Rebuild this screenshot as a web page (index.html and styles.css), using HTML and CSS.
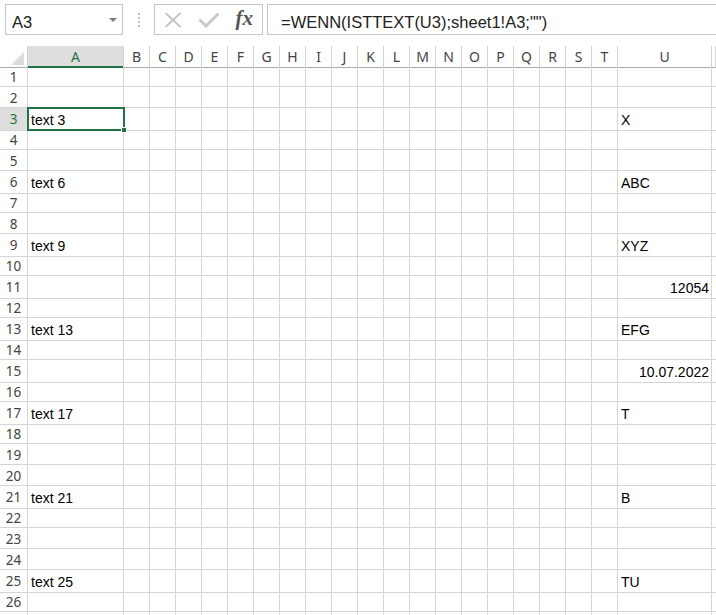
FILE: index.html
```
<!DOCTYPE html>
<html lang="de">
<head>
<meta charset="utf-8">
<title>Excel</title>
<link rel="stylesheet" href="styles.css">
</head>
<body>
<div class="topbar">
  <div class="namebox"><span class="nbtext">A3</span><span class="caret"></span></div>
  <div class="grip"><span></span><span></span><span></span><span></span></div>
  <div class="fxbtns">
    <span class="btn"><svg width="18" height="16" viewBox="0 0 18 16"><path d="M1.5 1 L16.5 15 M16.5 1 L1.5 15" stroke="#c3c3c3" stroke-width="1.8" fill="none"/></svg></span>
    <span class="btn"><svg width="22" height="16" viewBox="0 0 22 16"><path d="M1.5 7.5 L8 14 L20.5 1.5" stroke="#c8c8c8" stroke-width="3" fill="none"/></svg></span>
    <span class="btn fx">fx</span>
  </div>
  <div class="formula">=WENN(ISTTEXT(U3);sheet1!A3;"")</div>
</div>
<div class="sheet">
  <div class="row head">
    <div class="corner"></div>
    <div class="h sel">A</div><div class="h">B</div><div class="h">C</div><div class="h">D</div><div class="h">E</div><div class="h">F</div><div class="h">G</div><div class="h">H</div><div class="h">I</div><div class="h">J</div><div class="h">K</div><div class="h">L</div><div class="h">M</div><div class="h">N</div><div class="h">O</div><div class="h">P</div><div class="h">Q</div><div class="h">R</div><div class="h">S</div><div class="h">T</div><div class="h">U</div><div class="h"></div>
  </div>
  <div class="row"><div class="rh">1</div><div class="c"></div><div class="mid"></div><div class="c"></div><div class="c"></div></div>
  <div class="row"><div class="rh">2</div><div class="c"></div><div class="mid"></div><div class="c"></div><div class="c"></div></div>
  <div class="row"><div class="rh sel">3</div><div class="c">text 3</div><div class="mid"></div><div class="c">X</div><div class="c"></div></div>
  <div class="row"><div class="rh">4</div><div class="c"></div><div class="mid"></div><div class="c"></div><div class="c"></div></div>
  <div class="row"><div class="rh">5</div><div class="c"></div><div class="mid"></div><div class="c"></div><div class="c"></div></div>
  <div class="row"><div class="rh">6</div><div class="c">text 6</div><div class="mid"></div><div class="c">ABC</div><div class="c"></div></div>
  <div class="row"><div class="rh">7</div><div class="c"></div><div class="mid"></div><div class="c"></div><div class="c"></div></div>
  <div class="row"><div class="rh">8</div><div class="c"></div><div class="mid"></div><div class="c"></div><div class="c"></div></div>
  <div class="row"><div class="rh">9</div><div class="c">text 9</div><div class="mid"></div><div class="c">XYZ</div><div class="c"></div></div>
  <div class="row"><div class="rh">10</div><div class="c"></div><div class="mid"></div><div class="c"></div><div class="c"></div></div>
  <div class="row"><div class="rh">11</div><div class="c"></div><div class="mid"></div><div class="c num">12054</div><div class="c"></div></div>
  <div class="row"><div class="rh">12</div><div class="c"></div><div class="mid"></div><div class="c"></div><div class="c"></div></div>
  <div class="row"><div class="rh">13</div><div class="c">text 13</div><div class="mid"></div><div class="c">EFG</div><div class="c"></div></div>
  <div class="row"><div class="rh">14</div><div class="c"></div><div class="mid"></div><div class="c"></div><div class="c"></div></div>
  <div class="row"><div class="rh">15</div><div class="c"></div><div class="mid"></div><div class="c num">10.07.2022</div><div class="c"></div></div>
  <div class="row"><div class="rh">16</div><div class="c"></div><div class="mid"></div><div class="c"></div><div class="c"></div></div>
  <div class="row"><div class="rh">17</div><div class="c">text 17</div><div class="mid"></div><div class="c">T</div><div class="c"></div></div>
  <div class="row"><div class="rh">18</div><div class="c"></div><div class="mid"></div><div class="c"></div><div class="c"></div></div>
  <div class="row"><div class="rh">19</div><div class="c"></div><div class="mid"></div><div class="c"></div><div class="c"></div></div>
  <div class="row"><div class="rh">20</div><div class="c"></div><div class="mid"></div><div class="c"></div><div class="c"></div></div>
  <div class="row"><div class="rh">21</div><div class="c">text 21</div><div class="mid"></div><div class="c">B</div><div class="c"></div></div>
  <div class="row"><div class="rh">22</div><div class="c"></div><div class="mid"></div><div class="c"></div><div class="c"></div></div>
  <div class="row"><div class="rh">23</div><div class="c"></div><div class="mid"></div><div class="c"></div><div class="c"></div></div>
  <div class="row"><div class="rh">24</div><div class="c"></div><div class="mid"></div><div class="c"></div><div class="c"></div></div>
  <div class="row"><div class="rh">25</div><div class="c">text 25</div><div class="mid"></div><div class="c">TU</div><div class="c"></div></div>
  <div class="row"><div class="rh">26</div><div class="c"></div><div class="mid"></div><div class="c"></div><div class="c"></div></div>
  <div class="row"><div class="rh"></div><div class="c"></div><div class="mid"></div><div class="c"></div><div class="c"></div></div>
  <div class="selection"><span class="handle"></span></div>
</div>
</body>
</html>
```
FILE: styles.css
```
* { box-sizing: border-box; }
html, body { margin: 0; padding: 0; }
body {
  width: 716px;
  height: 615px;
  overflow: hidden;
  background: #fff;
  font-family: "Liberation Sans", Arial, sans-serif;
  color: #000;
}

/* formula bar */
.topbar {
  height: 46px;
  display: flex;
  align-items: flex-start;
  padding: 4px 0 0 5px;
}
.namebox {
  width: 118px;
  height: 31px;
  border: 1px solid #c6c6c6;
  display: flex;
  align-items: center;
  justify-content: space-between;
  padding: 0 5px 0 6px;
  font-size: 16.5px;
  color: #222;
}
.nbtext { padding-top: 6px; line-height: 19px; }
.caret {
  width: 0;
  height: 0;
  border-left: 4px solid transparent;
  border-right: 4px solid transparent;
  border-top: 4px solid #7a7a7a;
}
.grip {
  width: 31px;
  height: 31px;
  display: flex;
  flex-direction: column;
  align-items: center;
  justify-content: center;
  gap: 2px;
}
.grip span { width: 2px; height: 2px; background: #c4c4c4; }
.fxbtns {
  width: 109px;
  height: 31px;
  border: 1px solid #c6c6c6;
  display: flex;
  align-items: center;
}
.btn {
  width: 36px;
  height: 29px;
  display: flex;
  align-items: center;
  justify-content: center;
}
.fx {
  font-family: "Liberation Serif", "Times New Roman", serif;
  font-style: italic;
  font-weight: bold;
  font-size: 21px;
  color: #555;
  padding-bottom: 2px;
}
.formula {
  flex: 1;
  height: 31px;
  margin-left: 4px;
  border: 1px solid #c6c6c6;
  border-right: none;
  font-size: 16.5px;
  line-height: 19px;
  padding: 8px 0 0 13px;
  color: #222;
  white-space: nowrap;
}

/* sheet */
.sheet { position: relative; }
.row {
  display: grid;
  grid-template-columns: 28px 96px repeat(19, 26px) 94px 1fr;
  height: 21px;
}
.row.head { height: 20px; }
.corner {
  position: relative;
  border-right: 1px solid #d4d4d4;
  border-bottom: 1px solid #ababab;
}
.corner::after {
  content: "";
  position: absolute;
  right: 3px;
  bottom: 2px;
  width: 13px;
  height: 13px;
  background: #dcdcdc;
  clip-path: polygon(100% 0, 100% 100%, 0 100%);
}
.h {
  border-right: 1px solid #d4d4d4;
  border-bottom: 1px solid #ababab;
  text-align: center;
  font-family: "Noto Sans", "Open Sans", sans-serif;
  font-size: 14px;
  line-height: 19px;
  padding-top: 1px;
  color: #444;
}
.h.sel {
  background: #dedede;
  color: #217346;
  border-bottom: 2px solid #217346;
}
.rh {
  border-right: 1px solid #d4d4d4;
  border-bottom: 1px solid #d4d4d4;
  text-align: center;
  font-family: "Noto Sans", "Open Sans", sans-serif;
  font-size: 13.5px;
  line-height: 18px;
  padding-top: 2px;
  color: #444;
}
.rh.sel { background: #dedede; color: #217346; }
.c {
  border-right: 1px solid #d4d4d4;
  border-bottom: 1px solid #d4d4d4;
  font-size: 14px;
  line-height: 20px;
  padding: 2px 2px 0 3px;
  white-space: nowrap;
}
.c.num { text-align: right; }
.mid {
  grid-column: span 19;
  border-bottom: 1px solid #d4d4d4;
  background: repeating-linear-gradient(to right, transparent 0 25px, #d4d4d4 25px 26px);
}

/* active cell */
.selection {
  position: absolute;
  left: 27px;
  top: 61px;
  width: 98px;
  height: 24px;
  border: 2px solid #217346;
}
.handle {
  position: absolute;
  right: -4px;
  bottom: -4px;
  width: 6px;
  height: 6px;
  background: #217346;
  border: 1px solid #fff;
}
```
